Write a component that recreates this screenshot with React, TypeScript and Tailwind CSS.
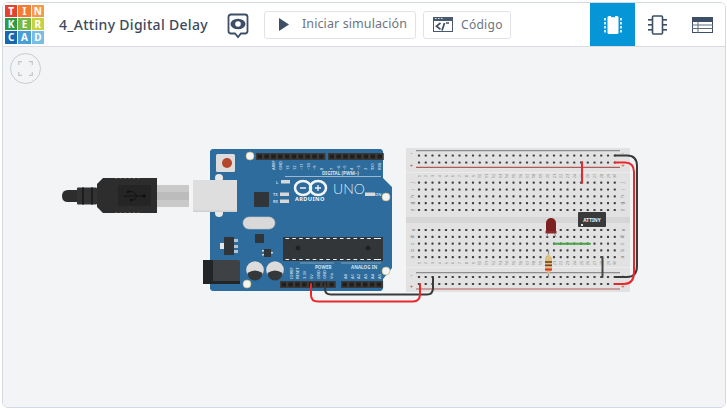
import React from "react";

const font = { fontFamily: "'Noto Sans', sans-serif" };

const logoTiles = [
  { letter: "T", color: "bg-[#e2432e]" },
  { letter: "I", color: "bg-[#f47b34]" },
  { letter: "N", color: "bg-[#f79a45]" },
  { letter: "K", color: "bg-[#2c9c48]" },
  { letter: "E", color: "bg-[#78b944]" },
  { letter: "R", color: "bg-[#c6d23f]" },
  { letter: "C", color: "bg-[#1768b1]" },
  { letter: "A", color: "bg-[#4a9ed6]" },
  { letter: "D", color: "bg-[#78bde3]" },
];

const columns = Array.from({ length: 30 }, (_, i) => i);
const holeX = (i: number) => 419 + i * 6.75;

function Holes({ rows }: { rows: number[] }) {
  return (
    <g fill="#3f3f3f">
      {rows.map((y) =>
        columns.map((i) => (
          <rect key={`${y}-${i}`} x={holeX(i) - 1.1} y={y - 1.1} width={2.2} height={2.2} rx={0.7} />
        ))
      )}
    </g>
  );
}

function Header({ x, y, count, step }: { x: number; y: number; count: number; step: number }) {
  return (
    <g>
      <rect x={x} y={y} width={count * step + 1} height={7} fill="#3a3a3a" />
      {Array.from({ length: count }, (_, i) => (
        <rect key={i} x={x + 1.5 + i * step} y={y + 1.5} width={step - 2.4} height={4} fill="#1f1f1f" />
      ))}
    </g>
  );
}

function PinLabels({ items, y, anchor }: { items: { t: string; x: number }[]; y: number; anchor: "start" | "end" }) {
  return (
    <g fill="#c9d8e4" fontSize={4} fontWeight={600} textAnchor={anchor}>
      {items.map((p) => (
        <text key={p.t + p.x} x={p.x} y={y} transform={`rotate(-90 ${p.x} ${y})`}>
          {p.t}
        </text>
      ))}
    </g>
  );
}

function Board() {
  const dashes = Array.from({ length: 14 }, (_, i) => 289 + i * 6.8);
  return (
    <g>
      {/* board */}
      <path
        d="M212 149 H381 L383 151 V178 L392 187 V268 L383 279 V289 L381 291 H212 L210 289 V151 Z"
        fill="#2d6c9c"
      />
      <circle cx={250} cy={156} r={4} fill="#f3f4f6" stroke="#c9b97a" strokeWidth={0.7} />
      <circle cx={386} cy={197} r={4} fill="#f3f4f6" stroke="#c9b97a" strokeWidth={0.7} />
      <circle cx={386} cy={271} r={4} fill="#f3f4f6" stroke="#c9b97a" strokeWidth={0.7} />
      <circle cx={247} cy={284} r={4} fill="#f3f4f6" stroke="#c9b97a" strokeWidth={0.7} />

      {/* reset */}
      <rect x={216} y={154} width={19} height={18} rx={1.5} fill="#dcdcdc" />
      <circle cx={227} cy={163} r={5} fill="#b5452b" />

      <Header x={256} y={153} count={10} step={6.85} />
      <Header x={328} y={153} count={8} step={6.85} />
      <Header x={280} y={281} count={8} step={6.85} />
      <Header x={341} y={281} count={6} step={6.85} />

      <PinLabels
        y={170}
        anchor="start"
        items={[
          { t: "AREF", x: 275 },
          { t: "GND", x: 282 },
          { t: "13", x: 289 },
          { t: "12", x: 296 },
          { t: "~11", x: 303 },
          { t: "~10", x: 310 },
          { t: "~9", x: 316 },
          { t: "8", x: 323 },
          { t: "7", x: 333 },
          { t: "~6", x: 340 },
          { t: "~5", x: 346 },
          { t: "4", x: 353 },
          { t: "~3", x: 360 },
          { t: "2", x: 367 },
          { t: "TX1", x: 374 },
          { t: "RX0", x: 381 },
        ]}
      />
      <text x={322} y={174.5} fontSize={4.6} fontWeight={700} fill="#d5e2ec">
        DIGITAL (PWM~)
      </text>
      <line x1={285} y1={176.5} x2={381} y2={176.5} stroke="#c9d8e4" strokeWidth={0.7} />

      {/* leds */}
      <text x={276} y={184} fontSize={4} fill="#d5e2ec" fontWeight={600}>L</text>
      <rect x={281} y={180} width={9} height={3.5} fill="#d8d8d8" />
      <text x={273} y={196} fontSize={4} fill="#d5e2ec" fontWeight={600}>TX</text>
      <rect x={280} y={192.5} width={9} height={3.5} fill="#d8d8d8" />
      <text x={273} y={203} fontSize={4} fill="#d5e2ec" fontWeight={600}>RX</text>
      <rect x={280} y={199.5} width={9} height={3.5} fill="#d8d8d8" />
      <rect x={365} y={192.5} width={10} height={3.5} fill="#d8d8d8" />
      <text x={375} y={196} fontSize={4} fill="#d5e2ec" fontWeight={600}>ON</text>

      {/* logo */}
      <g fill="none" stroke="#f2f5f8" strokeWidth={2.6}>
        <ellipse cx={303} cy={188} rx={8} ry={7} />
        <ellipse cx={318} cy={188} rx={8} ry={7} />
      </g>
      <g stroke="#f2f5f8" strokeWidth={1.3}>
        <line x1={300} y1={188} x2={306} y2={188} />
        <line x1={315} y1={188} x2={321} y2={188} />
        <line x1={318} y1={185} x2={318} y2={191} />
      </g>
      <text x={295} y={201} fontSize={5.6} fontWeight={700} fill="#f2f5f8" letterSpacing={0.4}>
        ARDUINO
      </text>
      <text x={333} y={194} fontSize={14} fontWeight={300} fill="#dfe8ef" style={{ fontFamily: "'Lato', sans-serif" }}>
        UNO
      </text>

      {/* parts */}
      <rect x={254} y={192} width={15} height={15} rx={1} fill="#2f3538" />
      <rect x={243} y={217} width={32} height={12} rx={6} fill="#d9d9d9" stroke="#c2c2c2" strokeWidth={0.6} />
      <rect x={255} y={234} width={9} height={9} rx={0.8} fill="#2f3538" />
      <rect x={224} y={237} width={10} height={18} fill="#2f3538" />
      <rect x={220} y={243} width={4} height={6} fill="#e6e6e6" />
      <rect x={234} y={239} width={4} height={3} fill="#b9c2c9" />
      <rect x={234} y={245} width={4} height={3} fill="#b9c2c9" />
      <rect x={234} y={250} width={4} height={3} fill="#b9c2c9" />
      <rect x={264} y={249} width={7} height={8} fill="#2f3538" />
      <rect x={262} y={250} width={2} height={1.5} fill="#d8d8d8" />
      <rect x={262} y={254} width={2} height={1.5} fill="#d8d8d8" />
      <rect x={271} y={252} width={2} height={1.5} fill="#d8d8d8" />

      {/* atmega */}
      <rect x={283} y={237} width={100} height={24} fill="#333638" />
      {dashes.map((x) => (
        <g key={x} fill="#eeeeee">
          <rect x={x - 3.5} y={238} width={3.6} height={1} />
          <rect x={x - 3.5} y={259} width={3.6} height={1} />
        </g>
      ))}
      <rect x={376} y={238} width={5} height={1} fill="#eeeeee" />
      <rect x={376} y={259} width={5} height={1} fill="#eeeeee" />
      <circle cx={298} cy={248} r={2.5} fill="#1f2224" />
      <circle cx={368} cy={248} r={2.5} fill="#1f2224" />

      {/* capacitors */}
      {[255, 275].map((cx) => (
        <g key={cx}>
          <circle cx={cx} cy={270} r={8.8} fill="#dcdcdc" />
          <path d={`M${cx - 7.5} 273 A7.5 7.5 0 0 0 ${cx + 7.5} 273 Q${cx} 268 ${cx - 7.5} 273 Z`} fill="#34383a" />
        </g>
      ))}

      {/* power jack */}
      <rect x={203} y={260} width={37} height={24} rx={2} fill="#3e4245" />
      <rect x={203} y={260} width={10} height={24} fill="#222527" />
      <rect x={203} y={281} width={37} height={3} fill="#222527" />

      {/* power labels */}
      <line x1={300} y1={263} x2={334} y2={263} stroke="#9fbcd1" strokeWidth={0.7} />
      <line x1={341} y1={263} x2={381} y2={263} stroke="#9fbcd1" strokeWidth={0.7} />
      <text x={315} y={269} fontSize={4.6} fontWeight={700} fill="#d5e2ec">POWER</text>
      <text x={351} y={269} fontSize={4.6} fontWeight={700} fill="#d5e2ec">ANALOG IN</text>
      <PinLabels
        y={279}
        anchor="start"
        items={[
          { t: "IOREF", x: 293 },
          { t: "RESET", x: 299 },
          { t: "3.3V", x: 306 },
          { t: "5V", x: 313 },
          { t: "GND", x: 320 },
          { t: "GND", x: 326 },
          { t: "Vin", x: 333 },
          { t: "A0", x: 347 },
          { t: "A1", x: 354 },
          { t: "A2", x: 360 },
          { t: "A3", x: 367 },
          { t: "A4", x: 374 },
          { t: "A5", x: 381 },
        ]}
      />
    </g>
  );
}

function UsbPlug() {
  return (
    <g>
      <rect x={157} y={185} width={32} height={22} fill="#c9c9c9" />
      <rect x={157} y={192} width={32} height={8} fill="#bcbcbc" />
      <path d="M62 196 Q62 190 68 190 H78 V202 H68 Q62 202 62 196 Z" fill="#2d2d2d" />
      <rect x={77} y={187.5} width={20} height={17} rx={1} fill="#333" />
      <rect x={82} y={187.5} width={2} height={17} fill="#1d1d1d" />
      <rect x={91} y={187.5} width={2} height={17} fill="#1d1d1d" />
      <path d="M103 178 H157 V213 H103 L97 207 V184 Z" fill="#2d2d2d" />
      <rect x={118} y={185} width={33} height={21} fill="#252525" />
      <g stroke="#111" strokeWidth={0.9} fill="#111">
        <line x1={124} y1={196} x2={144} y2={196} />
        <path d="M128 191.5 H133 L137 196 M131 200 H134 L137 196" fill="none" />
        <rect x={127} y={190.5} width={2.5} height={2.5} stroke="none" />
        <circle cx={131} cy={200} r={1.2} stroke="none" />
        <circle cx={144} cy={196} r={1.8} stroke="none" />
      </g>
      <path d="M115 178.5 H141 M115 212.5 H141" stroke="#555" strokeWidth={1} strokeDasharray="2 2.5" />
    </g>
  );
}

// usb socket sits on top of the board
function UsbSocket() {
  return (
    <g>
      <circle cx={219} cy={178} r={4} fill="#e9e9e9" />
      <circle cx={219} cy={213} r={4} fill="#e9e9e9" />
      <rect x={193} y={180} width={44} height={32} fill="#dedede" />
      <rect x={193} y={210.5} width={44} height={1.5} fill="#cfcfcf" />
    </g>
  );
}

function Breadboard() {
  const labelsTop = ["j", "i", "h", "g", "f"];
  const labelsBottom = ["e", "d", "c", "b", "a"];
  const topRows = [182.7, 189.5, 196.4, 203.2, 210];
  const bottomRows = [230, 236.8, 243.6, 250.4, 257.2];
  return (
    <g>
      <rect x={406} y={148} width={224} height={144} rx={1} fill="#e2e2e2" />
      <line x1={406} y1={172.5} x2={630} y2={172.5} stroke="#ececec" strokeWidth={1} />
      <line x1={406} y1={267.5} x2={630} y2={267.5} stroke="#ececec" strokeWidth={1} />
      <rect x={406} y={217} width={224} height={6} fill="#d6d6d6" />

      <line x1={416} y1={150.7} x2={620} y2={150.7} stroke="#8d8d8d" strokeWidth={1.2} />
      <line x1={416} y1={167.3} x2={620} y2={167.3} stroke="#b25b56" strokeWidth={1.2} />
      <line x1={416} y1={272.7} x2={620} y2={272.7} stroke="#8d8d8d" strokeWidth={1.2} />
      <line x1={416} y1={289} x2={620} y2={289} stroke="#b25b56" strokeWidth={1.2} />

      <Holes rows={[155.5, 162.5, ...topRows, ...bottomRows, 277, 284]} />

      <g fontSize={5.5} fill="#666" textAnchor="middle">
        <text x={411.5} y={155}>-</text>
        <text x={623} y={155}>-</text>
        <text x={411.5} y={277}>-</text>
        <text x={623} y={277}>-</text>
      </g>
      <g fontSize={6} fill="#c2453f" textAnchor="middle">
        <text x={411.5} y={168}>+</text>
        <text x={623} y={168}>+</text>
        <text x={411.5} y={289}>+</text>
        <text x={623} y={289}>+</text>
      </g>

      <g fontSize={4.6} fill="#777" textAnchor="middle">
        {labelsTop.map((l, i) => (
          <g key={l}>
            <text x={413} y={topRows[i] + 1.5} transform={`rotate(-90 413 ${topRows[i]})`}>{l}</text>
            <text x={623} y={topRows[i] + 1.5} transform={`rotate(-90 623 ${topRows[i]})`}>{l}</text>
          </g>
        ))}
        {labelsBottom.map((l, i) => (
          <g key={l}>
            <text x={413} y={bottomRows[i] + 1.5} transform={`rotate(-90 413 ${bottomRows[i]})`}>{l}</text>
            <text x={623} y={bottomRows[i] + 1.5} transform={`rotate(-90 623 ${bottomRows[i]})`}>{l}</text>
          </g>
        ))}
      </g>
      <g fontSize={4} fill="#8a8a8a" textAnchor="middle">
        {columns.map((i) => (
          <g key={i}>
            <text x={holeX(i)} y={177.5} transform={`rotate(-90 ${holeX(i)} 176)`}>{i + 1}</text>
            <text x={holeX(i)} y={264.5} transform={`rotate(-90 ${holeX(i)} 263)`}>{i + 1}</text>
          </g>
        ))}
      </g>
    </g>
  );
}

function Circuit() {
  return (
    <g>
      {/* led */}
      <g stroke="#9a9a9a" strokeWidth={1}>
        <line x1={548} y1={232} x2={547} y2={237} />
        <line x1={554} y1={232} x2={556} y2={237} />
      </g>
      <path d="M546 223 A5 5 0 0 1 556 223 V232 H546 Z" fill="#7d2021" />
      <rect x={545.5} y={231} width={11} height={2.5} fill="#8c2a2a" />

      {/* resistor */}
      <line x1={548.5} y1={250} x2={548.5} y2={277} stroke="#8f8f8f" strokeWidth={1.2} />
      <path d="M548.5 254 L552 258 V270 L548.5 274 L545 270 V258 Z" fill="#dcc07f" />
      <rect x={545} y={261} width={7} height={2} fill="#8b5a2b" />
      <rect x={545} y={264.5} width={7} height={1.6} fill="#7a3a20" />
      <rect x={545} y={268.5} width={7} height={2} fill="#e62d2d" />

      {/* attiny */}
      <rect x={578} y={212} width={28} height={15} rx={1} fill="#3a3a3a" />
      <rect x={581} y={224} width={2} height={2} fill="#e8e8e8" />
      <text x={592} y={222} textAnchor="middle" fontSize={4.8} fontWeight={700} fill="#f0f0f0">
        ATTINY
      </text>

      {/* wires */}
      <g fill="none" strokeLinecap="round">
        <path d="M582 162 V183" stroke="#e8282b" strokeWidth={2} />
        <path d="M554 243.7 H590" stroke="#43a543" strokeWidth={2} />
        <path d="M602.5 257 V277" stroke="#444" strokeWidth={2} />
        <path
          d="M325 284 V289 Q325 294.5 331 294.5 H427 Q433 294.5 433 288 V277"
          stroke="#3a3a3a"
          strokeWidth={2}
        />
        <path
          d="M311 284 V295 Q311 301.5 318 301.5 H413 Q420 301.5 420 294 V284"
          stroke="#e8282b"
          strokeWidth={2}
        />
        <path
          d="M615 155.5 H627 Q637 155.5 637 166 V266 Q637 277 627 277 H615"
          stroke="#3a3a3a"
          strokeWidth={2}
        />
        <path
          d="M615 162.5 H625 Q634 162.5 634 172 V272 Q634 284 624 284 H615"
          stroke="#e8282b"
          strokeWidth={2}
        />
      </g>
    </g>
  );
}

export default function App() {
  return (
    <div className="w-[727px] h-[409px] bg-white overflow-hidden pt-[2px] pl-[2px] pr-[1px]" style={font}>
      <div className="h-[406px] rounded-[6px] border border-[#d3d9e0] overflow-hidden flex flex-col">
        <header className="h-[44px] bg-white flex items-center border-b border-[#d9dde2] shrink-0">
          <div className="grid grid-cols-3 gap-[1px] w-[39px] h-[39px] ml-[2px] mt-[-1px]">
            {logoTiles.map((t) => (
              <div
                key={t.letter}
                className={`${t.color} text-white text-[10px] font-bold flex items-center justify-center leading-none`}
              >
                {t.letter}
              </div>
            ))}
          </div>
          <h1 className="ml-[15px] text-[14px] font-medium text-[#3c4a5e] w-[168px] whitespace-nowrap tracking-[0.3px]">
            4_Attiny Digital Delay
          </h1>
          <svg width="22" height="26" viewBox="0 0 22 26" className="mr-[15px] mt-[2px]">
            <path
              d="M4 1.5 H18 Q20.5 1.5 20.5 4 V18 Q20.5 20.5 18 20.5 H14 L11 24 L8 20.5 H4 Q1.5 20.5 1.5 18 V4 Q1.5 1.5 4 1.5 Z"
              fill="none"
              stroke="#3c4f66"
              strokeWidth="1.8"
            />
            <ellipse cx="11" cy="11" rx="7.5" ry="5.2" fill="#3c4f66" />
            <circle cx="11" cy="11" r="2.8" fill="white" />
          </svg>
          <button className="w-[152px] h-[28px] border border-[#dfe3e8] rounded-[3px] flex items-center pl-[14px] text-[12.5px] text-[#6b7480] tracking-[0.1px]">
            <svg width="10" height="13" viewBox="0 0 10 13" className="mr-[13px]">
              <path d="M0 0 L10 6.5 L0 13 Z" fill="#3c4f66" />
            </svg>
            Iniciar simulación
          </button>
          <button className="ml-[7px] w-[88px] h-[28px] border border-[#dfe3e8] rounded-[3px] flex items-center pl-[9px] text-[12px] text-[#6b7480] tracking-[0.3px]">
            <svg width="20" height="15" viewBox="0 0 20 15" className="mr-[8px]">
              <rect x="0.5" y="0.5" width="19" height="14" fill="none" stroke="#4a5a6e" />
              <rect x="0" y="0" width="20" height="4" fill="#4a5a6e" />
              <path d="M2 1.5 H3.5 M5 1.5 H6.5 M8 1.5 H9.5" stroke="#dfe3e8" strokeWidth="1" />
              <path d="M7.5 6 L3.5 9.2 L7.5 12.4 M9 13.5 L11.5 6 M13 6 H16" fill="none" stroke="#3c4f66" strokeWidth="1.7" />
            </svg>
            Código
          </button>
          <div className="ml-auto flex h-full">
            <div className="w-[45px] bg-[#0696d7] flex items-center justify-center">
              <svg width="18" height="20" viewBox="0 0 18 20">
                <rect x="3.5" y="1" width="11" height="18" rx="1.5" fill="white" />
                <rect x="7" y="1" width="4" height="1.2" fill="#0696d7" />
                {[3, 7, 11, 15].map((y) => (
                  <g key={y} fill="#cfeaf7">
                    <rect x="0" y={y} width="2" height="2.5" />
                    <rect x="16" y={y} width="2" height="2.5" />
                  </g>
                ))}
              </svg>
            </div>
            <div className="w-[45px] flex items-center justify-center">
              <svg width="19" height="20" viewBox="0 0 19 20">
                <rect x="4.5" y="1" width="10" height="18" rx="1" fill="none" stroke="#3c4f66" strokeWidth="1.6" />
                {[4, 9, 14].map((y) => (
                  <g key={y} fill="#3c4f66">
                    <rect x="0" y={y} width="4" height="1.6" />
                    <rect x="15" y={y} width="4" height="1.6" />
                  </g>
                ))}
              </svg>
            </div>
            <div className="w-[45px] flex items-center justify-center">
              <svg width="21" height="16" viewBox="0 0 21 16">
                <rect x="0.5" y="0.5" width="20" height="15" fill="none" stroke="#3c4f66" />
                <rect x="0" y="0" width="21" height="5" fill="#3c4f66" />
                <path d="M0 8 H21 M0 11.5 H21 M6 5 V16" stroke="#5d6d80" strokeWidth="1" />
              </svg>
            </div>
          </div>
        </header>
        <main className="flex-1 bg-[#f3f4f6] relative">
          <div className="absolute left-[7px] top-[6px] w-[31px] h-[31px] rounded-full border border-[#c9cccf] flex items-center justify-center">
            <svg width="15" height="15" viewBox="0 0 15 15" fill="none" stroke="#c4c8cc" strokeWidth="1.3">
              <path d="M0.7 4 V0.7 H4 M11 0.7 H14.3 V4 M14.3 11 V14.3 H11 M4 14.3 H0.7 V11" />
            </svg>
          </div>
          <svg
            width="590"
            height="170"
            viewBox="55 140 590 170"
            className="absolute left-[52px] top-[93px]"
          >
            <UsbPlug />
            <Board />
            <UsbSocket />
            <Breadboard />
            <Circuit />
          </svg>
        </main>
      </div>
    </div>
  );
}
